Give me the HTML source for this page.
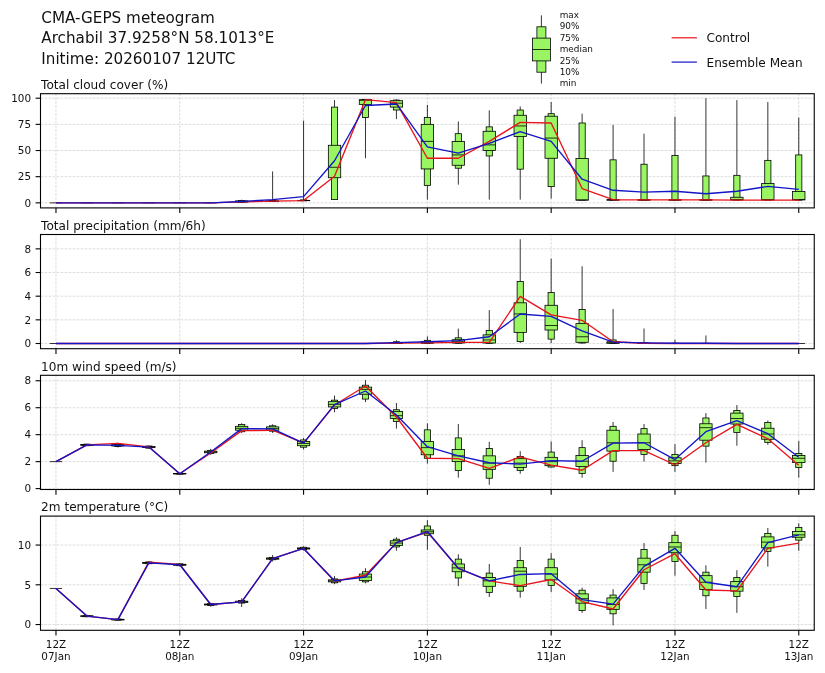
<!DOCTYPE html>
<html><head><meta charset="utf-8"><title>CMA-GEPS meteogram</title>
<style>html,body{margin:0;padding:0;background:#fff}svg{display:block;will-change:transform}</style></head>
<body>
<svg width="825" height="673" viewBox="0 0 825 673" font-family='"DejaVu Sans", "Liberation Sans", sans-serif'>
<rect width="825" height="673" fill="#fff"/>
<text x="41.3" y="22.7" font-size="15.2" fill="#111">CMA-GEPS meteogram</text>
<text x="41.3" y="43.3" font-size="15.2" fill="#111">Archabil 37.9258°N 58.1013°E</text>
<text x="41.3" y="63.9" font-size="15.2" fill="#111">Initime: 20260107 12UTC</text>
<g stroke="#000" stroke-width="0.8" fill="#99f562">
<line x1="541.4" y1="83.6" x2="541.4" y2="15.4"/>
<rect x="536.9" y="26.8" width="9" height="45.4"/>
<rect x="532.4" y="38.1" width="18" height="22.8"/>
<line x1="532.4" y1="49.5" x2="550.4" y2="49.5"/>
</g>
<text x="559.7" y="86.2" font-size="8.9" fill="#111">min</text>
<text x="559.7" y="74.8" font-size="8.9" fill="#111">10%</text>
<text x="559.7" y="63.5" font-size="8.9" fill="#111">25%</text>
<text x="559.7" y="52.1" font-size="8.9" fill="#111">median</text>
<text x="559.7" y="40.7" font-size="8.9" fill="#111">75%</text>
<text x="559.7" y="29.4" font-size="8.9" fill="#111">90%</text>
<text x="559.7" y="18.0" font-size="8.9" fill="#111">max</text>
<line x1="671.6" y1="37.8" x2="696.9" y2="37.8" stroke="#e8141c" stroke-width="1.2"/>
<line x1="671.6" y1="62.1" x2="696.9" y2="62.1" stroke="#1414c8" stroke-width="1.2"/>
<text x="706.5" y="41.9" font-size="12.1" fill="#111">Control</text>
<text x="706.5" y="66.5" font-size="12.1" fill="#111">Ensemble Mean</text>
<g id="panel0">
<g stroke="#d2d2d2" stroke-width="0.76" stroke-dasharray="2.8,1.2" fill="none">
<line x1="40.5" y1="202.85" x2="814.25" y2="202.85"/>
<line x1="40.5" y1="176.69" x2="814.25" y2="176.69"/>
<line x1="40.5" y1="150.52" x2="814.25" y2="150.52"/>
<line x1="40.5" y1="124.36" x2="814.25" y2="124.36"/>
<line x1="40.5" y1="98.20" x2="814.25" y2="98.20"/>
<line x1="55.98" y1="207.9" x2="55.98" y2="93.7"/>
<line x1="179.78" y1="207.9" x2="179.78" y2="93.7"/>
<line x1="303.57" y1="207.9" x2="303.57" y2="93.7"/>
<line x1="427.38" y1="207.9" x2="427.38" y2="93.7"/>
<line x1="551.17" y1="207.9" x2="551.17" y2="93.7"/>
<line x1="674.98" y1="207.9" x2="674.98" y2="93.7"/>
<line x1="798.77" y1="207.9" x2="798.77" y2="93.7"/>
</g>
<g stroke="#000" stroke-width="0.8" fill="#99f562">
<line x1="55.98" y1="202.85" x2="55.98" y2="202.85"/>
<rect x="52.88" y="202.85" width="6.19" height="0.00"/>
<rect x="49.79" y="202.85" width="12.37" height="0.00"/>
<line x1="49.79" y1="202.85" x2="62.16" y2="202.85"/>
<line x1="86.92" y1="202.85" x2="86.92" y2="202.85"/>
<rect x="83.83" y="202.85" width="6.19" height="0.00"/>
<rect x="80.74" y="202.85" width="12.37" height="0.00"/>
<line x1="80.74" y1="202.85" x2="93.11" y2="202.85"/>
<line x1="117.88" y1="202.85" x2="117.88" y2="202.85"/>
<rect x="114.78" y="202.85" width="6.19" height="0.00"/>
<rect x="111.69" y="202.85" width="12.37" height="0.00"/>
<line x1="111.69" y1="202.85" x2="124.06" y2="202.85"/>
<line x1="148.82" y1="202.85" x2="148.82" y2="202.85"/>
<rect x="145.73" y="202.85" width="6.19" height="0.00"/>
<rect x="142.64" y="202.85" width="12.37" height="0.00"/>
<line x1="142.64" y1="202.85" x2="155.01" y2="202.85"/>
<line x1="179.78" y1="202.85" x2="179.78" y2="202.85"/>
<rect x="176.68" y="202.85" width="6.19" height="0.00"/>
<rect x="173.59" y="202.85" width="12.37" height="0.00"/>
<line x1="173.59" y1="202.85" x2="185.96" y2="202.85"/>
<line x1="210.72" y1="202.85" x2="210.72" y2="202.85"/>
<rect x="207.63" y="202.85" width="6.19" height="0.00"/>
<rect x="204.54" y="202.85" width="12.37" height="0.00"/>
<line x1="204.54" y1="202.85" x2="216.91" y2="202.85"/>
<line x1="241.67" y1="202.54" x2="241.67" y2="199.71"/>
<rect x="238.58" y="200.44" width="6.19" height="1.88"/>
<rect x="235.49" y="200.86" width="12.37" height="1.26"/>
<line x1="235.49" y1="201.59" x2="247.86" y2="201.59"/>
<line x1="272.62" y1="201.80" x2="272.62" y2="171.45"/>
<rect x="269.53" y="200.55" width="6.19" height="0.94"/>
<rect x="266.44" y="200.97" width="12.37" height="0.31"/>
<line x1="266.44" y1="201.18" x2="278.81" y2="201.18"/>
<line x1="303.57" y1="200.97" x2="303.57" y2="120.60"/>
<rect x="300.48" y="199.92" width="6.19" height="0.84"/>
<rect x="297.39" y="200.34" width="12.37" height="0.31"/>
<line x1="297.39" y1="200.55" x2="309.76" y2="200.55"/>
<line x1="334.53" y1="199.61" x2="334.53" y2="100.08"/>
<rect x="331.43" y="107.10" width="6.19" height="92.51"/>
<rect x="328.34" y="145.29" width="12.37" height="32.44"/>
<line x1="328.34" y1="167.27" x2="340.71" y2="167.27"/>
<line x1="365.48" y1="158.27" x2="365.48" y2="99.04"/>
<rect x="362.38" y="99.35" width="6.19" height="18.21"/>
<rect x="359.29" y="99.67" width="12.37" height="4.92"/>
<line x1="359.29" y1="100.29" x2="371.66" y2="100.29"/>
<line x1="396.43" y1="119.13" x2="396.43" y2="99.35"/>
<rect x="393.33" y="100.08" width="6.19" height="9.94"/>
<rect x="390.24" y="100.71" width="12.37" height="6.38"/>
<line x1="390.24" y1="103.22" x2="402.61" y2="103.22"/>
<line x1="427.38" y1="199.61" x2="427.38" y2="104.90"/>
<rect x="424.28" y="117.56" width="6.19" height="67.81"/>
<rect x="421.19" y="124.36" width="12.37" height="44.58"/>
<line x1="421.19" y1="141.42" x2="433.56" y2="141.42"/>
<line x1="458.32" y1="184.64" x2="458.32" y2="121.43"/>
<rect x="455.23" y="133.68" width="6.19" height="34.53"/>
<rect x="452.14" y="141.42" width="12.37" height="23.86"/>
<line x1="452.14" y1="154.92" x2="464.51" y2="154.92"/>
<line x1="489.28" y1="199.61" x2="489.28" y2="110.34"/>
<rect x="486.18" y="126.87" width="6.19" height="29.09"/>
<rect x="483.09" y="131.27" width="12.37" height="19.26"/>
<line x1="483.09" y1="144.87" x2="495.46" y2="144.87"/>
<line x1="520.23" y1="199.61" x2="520.23" y2="106.47"/>
<rect x="517.13" y="110.03" width="6.19" height="59.13"/>
<rect x="514.04" y="115.26" width="12.37" height="21.24"/>
<line x1="514.04" y1="125.93" x2="526.41" y2="125.93"/>
<line x1="551.17" y1="198.56" x2="551.17" y2="102.07"/>
<rect x="548.08" y="113.69" width="6.19" height="72.94"/>
<rect x="544.99" y="116.20" width="12.37" height="42.07"/>
<line x1="544.99" y1="138.07" x2="557.36" y2="138.07"/>
<line x1="582.12" y1="200.13" x2="582.12" y2="113.69"/>
<rect x="579.03" y="123.00" width="6.19" height="77.13"/>
<rect x="575.94" y="158.48" width="12.37" height="41.65"/>
<line x1="575.94" y1="199.92" x2="588.31" y2="199.92"/>
<line x1="613.08" y1="200.13" x2="613.08" y2="124.89"/>
<rect x="609.98" y="159.84" width="6.19" height="40.29"/>
<rect x="606.89" y="199.61" width="12.37" height="0.52"/>
<line x1="606.89" y1="200.02" x2="619.26" y2="200.02"/>
<line x1="644.02" y1="200.13" x2="644.02" y2="133.68"/>
<rect x="640.93" y="164.23" width="6.19" height="35.89"/>
<rect x="637.84" y="199.71" width="12.37" height="0.42"/>
<line x1="637.84" y1="200.02" x2="650.21" y2="200.02"/>
<line x1="674.98" y1="200.13" x2="674.98" y2="116.72"/>
<rect x="671.88" y="155.55" width="6.19" height="44.58"/>
<rect x="668.79" y="199.71" width="12.37" height="0.42"/>
<line x1="668.79" y1="200.02" x2="681.16" y2="200.02"/>
<line x1="705.92" y1="200.13" x2="705.92" y2="98.20"/>
<rect x="702.83" y="175.95" width="6.19" height="24.17"/>
<rect x="699.74" y="199.71" width="12.37" height="0.42"/>
<line x1="699.74" y1="200.02" x2="712.11" y2="200.02"/>
<line x1="736.88" y1="200.13" x2="736.88" y2="100.08"/>
<rect x="733.78" y="175.33" width="6.19" height="24.80"/>
<rect x="730.69" y="197.25" width="12.37" height="2.67"/>
<line x1="730.69" y1="199.71" x2="743.06" y2="199.71"/>
<line x1="767.83" y1="200.13" x2="767.83" y2="102.07"/>
<rect x="764.73" y="160.36" width="6.19" height="39.77"/>
<rect x="761.64" y="183.49" width="12.37" height="16.43"/>
<line x1="761.64" y1="199.71" x2="774.01" y2="199.71"/>
<line x1="798.77" y1="200.13" x2="798.77" y2="117.56"/>
<rect x="795.68" y="154.92" width="6.19" height="45.21"/>
<rect x="792.59" y="191.44" width="12.37" height="8.48"/>
<line x1="792.59" y1="199.50" x2="804.96" y2="199.50"/>
</g>
<polyline points="55.98,202.85 86.92,202.85 117.88,202.85 148.82,202.85 179.78,202.85 210.72,202.85 241.67,201.80 272.62,201.18 303.57,200.55 334.53,176.27 365.48,99.67 396.43,102.60 427.38,158.27 458.32,158.27 489.28,141.42 520.23,122.37 551.17,123.00 582.12,188.51 613.08,199.71 644.02,199.92 674.98,199.92 705.92,199.92 736.88,200.13 767.83,200.13 798.77,200.13" fill="none" stroke="#e8141c" stroke-width="1.35" stroke-linejoin="round"/>
<polyline points="55.98,202.85 86.92,202.85 117.88,202.85 148.82,202.85 179.78,202.85 210.72,202.85 241.67,201.49 272.62,199.61 303.57,196.68 334.53,160.78 365.48,105.53 396.43,103.96 427.38,146.86 458.32,153.04 489.28,143.30 520.23,131.69 551.17,141.42 582.12,179.20 613.08,190.29 644.02,192.18 674.98,191.23 705.92,193.75 736.88,191.23 767.83,186.42 798.77,189.35" fill="none" stroke="#1414c8" stroke-width="1.35" stroke-linejoin="round"/>
<rect x="40.5" y="93.7" width="773.75" height="114.20" fill="none" stroke="#000" stroke-width="1.1"/>
<g stroke="#000" stroke-width="1.1">
<line x1="35.60" y1="202.85" x2="40.5" y2="202.85"/>
<line x1="35.60" y1="176.69" x2="40.5" y2="176.69"/>
<line x1="35.60" y1="150.52" x2="40.5" y2="150.52"/>
<line x1="35.60" y1="124.36" x2="40.5" y2="124.36"/>
<line x1="35.60" y1="98.20" x2="40.5" y2="98.20"/>
<line x1="55.98" y1="207.9" x2="55.98" y2="213.10"/>
<line x1="179.78" y1="207.9" x2="179.78" y2="213.10"/>
<line x1="303.57" y1="207.9" x2="303.57" y2="213.10"/>
<line x1="427.38" y1="207.9" x2="427.38" y2="213.10"/>
<line x1="551.17" y1="207.9" x2="551.17" y2="213.10"/>
<line x1="674.98" y1="207.9" x2="674.98" y2="213.10"/>
<line x1="798.77" y1="207.9" x2="798.77" y2="213.10"/>
</g>
<g font-size="10.4" fill="#111" text-anchor="end">
<text x="31.10" y="206.55">0</text>
<text x="31.10" y="180.39">25</text>
<text x="31.10" y="154.22">50</text>
<text x="31.10" y="128.06">75</text>
<text x="31.10" y="101.90">100</text>
</g>
<text x="41.10" y="88.90" font-size="12.1" fill="#111">Total cloud cover (%)</text>
</g>
<g id="panel1">
<g stroke="#d2d2d2" stroke-width="0.76" stroke-dasharray="2.8,1.2" fill="none">
<line x1="40.5" y1="343.50" x2="814.25" y2="343.50"/>
<line x1="40.5" y1="319.84" x2="814.25" y2="319.84"/>
<line x1="40.5" y1="296.18" x2="814.25" y2="296.18"/>
<line x1="40.5" y1="272.52" x2="814.25" y2="272.52"/>
<line x1="40.5" y1="248.86" x2="814.25" y2="248.86"/>
<line x1="55.98" y1="348.70000000000005" x2="55.98" y2="234.5"/>
<line x1="179.78" y1="348.70000000000005" x2="179.78" y2="234.5"/>
<line x1="303.57" y1="348.70000000000005" x2="303.57" y2="234.5"/>
<line x1="427.38" y1="348.70000000000005" x2="427.38" y2="234.5"/>
<line x1="551.17" y1="348.70000000000005" x2="551.17" y2="234.5"/>
<line x1="674.98" y1="348.70000000000005" x2="674.98" y2="234.5"/>
<line x1="798.77" y1="348.70000000000005" x2="798.77" y2="234.5"/>
</g>
<g stroke="#000" stroke-width="0.8" fill="#99f562">
<line x1="55.98" y1="343.50" x2="55.98" y2="343.50"/>
<rect x="52.88" y="343.50" width="6.19" height="0.00"/>
<rect x="49.79" y="343.50" width="12.37" height="0.00"/>
<line x1="49.79" y1="343.50" x2="62.16" y2="343.50"/>
<line x1="86.92" y1="343.50" x2="86.92" y2="343.50"/>
<rect x="83.83" y="343.50" width="6.19" height="0.00"/>
<rect x="80.74" y="343.50" width="12.37" height="0.00"/>
<line x1="80.74" y1="343.50" x2="93.11" y2="343.50"/>
<line x1="117.88" y1="343.50" x2="117.88" y2="343.50"/>
<rect x="114.78" y="343.50" width="6.19" height="0.00"/>
<rect x="111.69" y="343.50" width="12.37" height="0.00"/>
<line x1="111.69" y1="343.50" x2="124.06" y2="343.50"/>
<line x1="148.82" y1="343.50" x2="148.82" y2="343.50"/>
<rect x="145.73" y="343.50" width="6.19" height="0.00"/>
<rect x="142.64" y="343.50" width="12.37" height="0.00"/>
<line x1="142.64" y1="343.50" x2="155.01" y2="343.50"/>
<line x1="179.78" y1="343.50" x2="179.78" y2="343.50"/>
<rect x="176.68" y="343.50" width="6.19" height="0.00"/>
<rect x="173.59" y="343.50" width="12.37" height="0.00"/>
<line x1="173.59" y1="343.50" x2="185.96" y2="343.50"/>
<line x1="210.72" y1="343.50" x2="210.72" y2="343.50"/>
<rect x="207.63" y="343.50" width="6.19" height="0.00"/>
<rect x="204.54" y="343.50" width="12.37" height="0.00"/>
<line x1="204.54" y1="343.50" x2="216.91" y2="343.50"/>
<line x1="241.67" y1="343.50" x2="241.67" y2="343.50"/>
<rect x="238.58" y="343.50" width="6.19" height="0.00"/>
<rect x="235.49" y="343.50" width="12.37" height="0.00"/>
<line x1="235.49" y1="343.50" x2="247.86" y2="343.50"/>
<line x1="272.62" y1="343.50" x2="272.62" y2="343.50"/>
<rect x="269.53" y="343.50" width="6.19" height="0.00"/>
<rect x="266.44" y="343.50" width="12.37" height="0.00"/>
<line x1="266.44" y1="343.50" x2="278.81" y2="343.50"/>
<line x1="303.57" y1="343.50" x2="303.57" y2="343.50"/>
<rect x="300.48" y="343.50" width="6.19" height="0.00"/>
<rect x="297.39" y="343.50" width="12.37" height="0.00"/>
<line x1="297.39" y1="343.50" x2="309.76" y2="343.50"/>
<line x1="334.53" y1="343.50" x2="334.53" y2="343.50"/>
<rect x="331.43" y="343.50" width="6.19" height="0.00"/>
<rect x="328.34" y="343.50" width="12.37" height="0.00"/>
<line x1="328.34" y1="343.50" x2="340.71" y2="343.50"/>
<line x1="365.48" y1="343.50" x2="365.48" y2="343.50"/>
<rect x="362.38" y="343.50" width="6.19" height="0.00"/>
<rect x="359.29" y="343.50" width="12.37" height="0.00"/>
<line x1="359.29" y1="343.50" x2="371.66" y2="343.50"/>
<line x1="396.43" y1="343.50" x2="396.43" y2="340.31"/>
<rect x="393.33" y="341.73" width="6.19" height="1.77"/>
<rect x="390.24" y="342.55" width="12.37" height="0.95"/>
<line x1="390.24" y1="343.15" x2="402.61" y2="343.15"/>
<line x1="427.38" y1="343.50" x2="427.38" y2="336.40"/>
<rect x="424.28" y="340.31" width="6.19" height="3.19"/>
<rect x="421.19" y="341.37" width="12.37" height="1.89"/>
<line x1="421.19" y1="342.55" x2="433.56" y2="342.55"/>
<line x1="458.32" y1="343.50" x2="458.32" y2="328.59"/>
<rect x="455.23" y="337.82" width="6.19" height="5.44"/>
<rect x="452.14" y="339.71" width="12.37" height="3.31"/>
<line x1="452.14" y1="341.73" x2="464.51" y2="341.73"/>
<line x1="489.28" y1="343.50" x2="489.28" y2="310.14"/>
<rect x="486.18" y="330.37" width="6.19" height="12.89"/>
<rect x="483.09" y="334.86" width="12.37" height="8.16"/>
<line x1="483.09" y1="339.95" x2="495.46" y2="339.95"/>
<line x1="520.23" y1="343.03" x2="520.23" y2="239.28"/>
<rect x="517.13" y="281.39" width="6.19" height="60.21"/>
<rect x="514.04" y="302.80" width="12.37" height="29.57"/>
<line x1="514.04" y1="313.93" x2="526.41" y2="313.93"/>
<line x1="551.17" y1="343.03" x2="551.17" y2="258.68"/>
<rect x="548.08" y="292.51" width="6.19" height="46.61"/>
<rect x="544.99" y="305.29" width="12.37" height="24.72"/>
<line x1="544.99" y1="325.52" x2="557.36" y2="325.52"/>
<line x1="582.12" y1="343.50" x2="582.12" y2="266.25"/>
<rect x="579.03" y="309.55" width="6.19" height="33.48"/>
<rect x="575.94" y="323.63" width="12.37" height="18.69"/>
<line x1="575.94" y1="336.76" x2="588.31" y2="336.76"/>
<line x1="613.08" y1="343.50" x2="613.08" y2="309.07"/>
<rect x="609.98" y="339.95" width="6.19" height="3.55"/>
<rect x="606.89" y="341.73" width="12.37" height="1.54"/>
<line x1="606.89" y1="342.79" x2="619.26" y2="342.79"/>
<line x1="644.02" y1="343.50" x2="644.02" y2="328.48"/>
<rect x="640.93" y="342.79" width="6.19" height="0.71"/>
<rect x="637.84" y="343.15" width="12.37" height="0.35"/>
<line x1="637.84" y1="343.38" x2="650.21" y2="343.38"/>
<line x1="674.98" y1="343.50" x2="674.98" y2="339.71"/>
<rect x="671.88" y="343.15" width="6.19" height="0.35"/>
<rect x="668.79" y="343.38" width="12.37" height="0.12"/>
<line x1="668.79" y1="343.50" x2="681.16" y2="343.50"/>
<line x1="705.92" y1="343.50" x2="705.92" y2="335.46"/>
<rect x="702.83" y="343.26" width="6.19" height="0.24"/>
<rect x="699.74" y="343.50" width="12.37" height="0.00"/>
<line x1="699.74" y1="343.50" x2="712.11" y2="343.50"/>
<line x1="736.88" y1="343.50" x2="736.88" y2="343.50"/>
<rect x="733.78" y="343.50" width="6.19" height="0.00"/>
<rect x="730.69" y="343.50" width="12.37" height="0.00"/>
<line x1="730.69" y1="343.50" x2="743.06" y2="343.50"/>
<line x1="767.83" y1="343.50" x2="767.83" y2="343.50"/>
<rect x="764.73" y="343.50" width="6.19" height="0.00"/>
<rect x="761.64" y="343.50" width="12.37" height="0.00"/>
<line x1="761.64" y1="343.50" x2="774.01" y2="343.50"/>
<line x1="798.77" y1="343.50" x2="798.77" y2="343.50"/>
<rect x="795.68" y="343.50" width="6.19" height="0.00"/>
<rect x="792.59" y="343.50" width="12.37" height="0.00"/>
<line x1="792.59" y1="343.50" x2="804.96" y2="343.50"/>
</g>
<polyline points="55.98,343.50 86.92,343.50 117.88,343.50 148.82,343.50 179.78,343.50 210.72,343.50 241.67,343.50 272.62,343.50 303.57,343.50 334.53,343.50 365.48,343.50 396.43,343.15 427.38,342.91 458.32,342.32 489.28,342.32 520.23,296.42 551.17,314.87 582.12,320.31 613.08,341.73 644.02,343.26 674.98,343.50 705.92,343.50 736.88,343.50 767.83,343.50 798.77,343.50" fill="none" stroke="#e8141c" stroke-width="1.35" stroke-linejoin="round"/>
<polyline points="55.98,343.50 86.92,343.50 117.88,343.50 148.82,343.50 179.78,343.50 210.72,343.50 241.67,343.50 272.62,343.50 303.57,343.50 334.53,343.50 365.48,343.50 396.43,342.55 427.38,341.73 458.32,340.66 489.28,336.76 520.23,314.04 551.17,316.41 582.12,330.96 613.08,342.08 644.02,342.91 674.98,343.26 705.92,343.26 736.88,343.50 767.83,343.50 798.77,343.50" fill="none" stroke="#1414c8" stroke-width="1.35" stroke-linejoin="round"/>
<rect x="40.5" y="234.5" width="773.75" height="114.20" fill="none" stroke="#000" stroke-width="1.1"/>
<g stroke="#000" stroke-width="1.1">
<line x1="35.60" y1="343.50" x2="40.5" y2="343.50"/>
<line x1="35.60" y1="319.84" x2="40.5" y2="319.84"/>
<line x1="35.60" y1="296.18" x2="40.5" y2="296.18"/>
<line x1="35.60" y1="272.52" x2="40.5" y2="272.52"/>
<line x1="35.60" y1="248.86" x2="40.5" y2="248.86"/>
<line x1="55.98" y1="348.70000000000005" x2="55.98" y2="353.90"/>
<line x1="179.78" y1="348.70000000000005" x2="179.78" y2="353.90"/>
<line x1="303.57" y1="348.70000000000005" x2="303.57" y2="353.90"/>
<line x1="427.38" y1="348.70000000000005" x2="427.38" y2="353.90"/>
<line x1="551.17" y1="348.70000000000005" x2="551.17" y2="353.90"/>
<line x1="674.98" y1="348.70000000000005" x2="674.98" y2="353.90"/>
<line x1="798.77" y1="348.70000000000005" x2="798.77" y2="353.90"/>
</g>
<g font-size="10.4" fill="#111" text-anchor="end">
<text x="31.10" y="347.20">0</text>
<text x="31.10" y="323.54">2</text>
<text x="31.10" y="299.88">4</text>
<text x="31.10" y="276.22">6</text>
<text x="31.10" y="252.56">8</text>
</g>
<text x="41.10" y="229.70" font-size="12.1" fill="#111">Total precipitation (mm/6h)</text>
</g>
<g id="panel2">
<g stroke="#d2d2d2" stroke-width="0.76" stroke-dasharray="2.8,1.2" fill="none">
<line x1="40.5" y1="488.60" x2="814.25" y2="488.60"/>
<line x1="40.5" y1="461.64" x2="814.25" y2="461.64"/>
<line x1="40.5" y1="434.68" x2="814.25" y2="434.68"/>
<line x1="40.5" y1="407.72" x2="814.25" y2="407.72"/>
<line x1="40.5" y1="380.76" x2="814.25" y2="380.76"/>
<line x1="55.98" y1="489.5" x2="55.98" y2="375.3"/>
<line x1="179.78" y1="489.5" x2="179.78" y2="375.3"/>
<line x1="303.57" y1="489.5" x2="303.57" y2="375.3"/>
<line x1="427.38" y1="489.5" x2="427.38" y2="375.3"/>
<line x1="551.17" y1="489.5" x2="551.17" y2="375.3"/>
<line x1="674.98" y1="489.5" x2="674.98" y2="375.3"/>
<line x1="798.77" y1="489.5" x2="798.77" y2="375.3"/>
</g>
<g stroke="#000" stroke-width="0.8" fill="#99f562">
<line x1="55.98" y1="461.64" x2="55.98" y2="461.64"/>
<rect x="52.88" y="461.64" width="6.19" height="0.00"/>
<rect x="49.79" y="461.64" width="12.37" height="0.00"/>
<line x1="49.79" y1="461.64" x2="62.16" y2="461.64"/>
<line x1="86.92" y1="446.14" x2="86.92" y2="443.71"/>
<rect x="83.83" y="444.12" width="6.19" height="1.62"/>
<rect x="80.74" y="444.52" width="12.37" height="0.81"/>
<line x1="80.74" y1="444.92" x2="93.11" y2="444.92"/>
<line x1="117.88" y1="447.49" x2="117.88" y2="442.77"/>
<rect x="114.78" y="443.85" width="6.19" height="2.70"/>
<rect x="111.69" y="444.52" width="12.37" height="1.48"/>
<line x1="111.69" y1="445.33" x2="124.06" y2="445.33"/>
<line x1="148.82" y1="448.83" x2="148.82" y2="445.46"/>
<rect x="145.73" y="446.00" width="6.19" height="2.16"/>
<rect x="142.64" y="446.54" width="12.37" height="1.08"/>
<line x1="142.64" y1="447.08" x2="155.01" y2="447.08"/>
<line x1="179.78" y1="474.58" x2="179.78" y2="472.83"/>
<rect x="176.68" y="473.23" width="6.19" height="0.94"/>
<rect x="173.59" y="473.50" width="12.37" height="0.40"/>
<line x1="173.59" y1="473.77" x2="185.96" y2="473.77"/>
<line x1="210.72" y1="454.90" x2="210.72" y2="448.83"/>
<rect x="207.63" y="450.32" width="6.19" height="3.24"/>
<rect x="204.54" y="451.13" width="12.37" height="1.62"/>
<line x1="204.54" y1="451.93" x2="216.91" y2="451.93"/>
<line x1="241.67" y1="433.06" x2="241.67" y2="423.22"/>
<rect x="238.58" y="424.44" width="6.19" height="7.28"/>
<rect x="235.49" y="426.32" width="12.37" height="3.91"/>
<line x1="235.49" y1="428.34" x2="247.86" y2="428.34"/>
<line x1="272.62" y1="433.06" x2="272.62" y2="424.30"/>
<rect x="269.53" y="425.78" width="6.19" height="5.39"/>
<rect x="266.44" y="426.86" width="12.37" height="3.37"/>
<line x1="266.44" y1="428.61" x2="278.81" y2="428.61"/>
<line x1="303.57" y1="449.51" x2="303.57" y2="437.92"/>
<rect x="300.48" y="439.94" width="6.19" height="7.28"/>
<rect x="297.39" y="441.42" width="12.37" height="4.31"/>
<line x1="297.39" y1="443.44" x2="309.76" y2="443.44"/>
<line x1="334.53" y1="412.30" x2="334.53" y2="395.59"/>
<rect x="331.43" y="400.17" width="6.19" height="8.22"/>
<rect x="328.34" y="401.65" width="12.37" height="5.26"/>
<line x1="328.34" y1="404.35" x2="340.71" y2="404.35"/>
<line x1="365.48" y1="402.06" x2="365.48" y2="380.09"/>
<rect x="362.38" y="385.21" width="6.19" height="13.88"/>
<rect x="359.29" y="387.10" width="12.37" height="7.14"/>
<line x1="359.29" y1="389.39" x2="371.66" y2="389.39"/>
<line x1="396.43" y1="428.61" x2="396.43" y2="403.00"/>
<rect x="393.33" y="409.74" width="6.19" height="11.73"/>
<rect x="390.24" y="411.36" width="12.37" height="7.14"/>
<line x1="390.24" y1="415.67" x2="402.61" y2="415.67"/>
<line x1="427.38" y1="463.53" x2="427.38" y2="423.36"/>
<rect x="424.28" y="429.83" width="6.19" height="28.44"/>
<rect x="421.19" y="441.42" width="12.37" height="13.35"/>
<line x1="421.19" y1="447.62" x2="433.56" y2="447.62"/>
<line x1="458.32" y1="477.68" x2="458.32" y2="424.03"/>
<rect x="455.23" y="437.92" width="6.19" height="32.62"/>
<rect x="452.14" y="449.51" width="12.37" height="12.13"/>
<line x1="452.14" y1="455.84" x2="464.51" y2="455.84"/>
<line x1="489.28" y1="484.83" x2="489.28" y2="441.82"/>
<rect x="486.18" y="448.56" width="6.19" height="29.66"/>
<rect x="483.09" y="455.84" width="12.37" height="13.48"/>
<line x1="483.09" y1="463.12" x2="495.46" y2="463.12"/>
<line x1="520.23" y1="473.77" x2="520.23" y2="451.13"/>
<rect x="517.13" y="456.38" width="6.19" height="14.15"/>
<rect x="514.04" y="458.67" width="12.37" height="8.76"/>
<line x1="514.04" y1="463.12" x2="526.41" y2="463.12"/>
<line x1="551.17" y1="467.44" x2="551.17" y2="441.42"/>
<rect x="548.08" y="452.07" width="6.19" height="14.96"/>
<rect x="544.99" y="457.33" width="12.37" height="8.36"/>
<line x1="544.99" y1="461.64" x2="557.36" y2="461.64"/>
<line x1="582.12" y1="477.68" x2="582.12" y2="440.21"/>
<rect x="579.03" y="447.62" width="6.19" height="25.75"/>
<rect x="575.94" y="455.44" width="12.37" height="11.05"/>
<line x1="575.94" y1="461.24" x2="588.31" y2="461.24"/>
<line x1="613.08" y1="471.88" x2="613.08" y2="422.01"/>
<rect x="609.98" y="426.32" width="6.19" height="34.91"/>
<rect x="606.89" y="430.23" width="12.37" height="20.89"/>
<line x1="606.89" y1="442.77" x2="619.26" y2="442.77"/>
<line x1="644.02" y1="461.64" x2="644.02" y2="424.03"/>
<rect x="640.93" y="428.61" width="6.19" height="25.75"/>
<rect x="637.84" y="434.01" width="12.37" height="15.50"/>
<line x1="637.84" y1="442.77" x2="650.21" y2="442.77"/>
<line x1="674.98" y1="471.88" x2="674.98" y2="444.12"/>
<rect x="671.88" y="454.36" width="6.19" height="11.32"/>
<rect x="668.79" y="457.73" width="12.37" height="5.80"/>
<line x1="668.79" y1="460.83" x2="681.16" y2="460.83"/>
<line x1="705.92" y1="462.58" x2="705.92" y2="413.11"/>
<rect x="702.83" y="417.96" width="6.19" height="28.17"/>
<rect x="699.74" y="423.76" width="12.37" height="16.45"/>
<line x1="699.74" y1="427.67" x2="712.11" y2="427.67"/>
<line x1="736.88" y1="445.73" x2="736.88" y2="405.02"/>
<rect x="733.78" y="410.42" width="6.19" height="22.11"/>
<rect x="730.69" y="413.11" width="12.37" height="10.92"/>
<line x1="730.69" y1="418.50" x2="743.06" y2="418.50"/>
<line x1="767.83" y1="444.79" x2="767.83" y2="420.53"/>
<rect x="764.73" y="422.41" width="6.19" height="19.95"/>
<rect x="761.64" y="428.21" width="12.37" height="11.05"/>
<line x1="761.64" y1="434.01" x2="774.01" y2="434.01"/>
<line x1="798.77" y1="477.68" x2="798.77" y2="440.88"/>
<rect x="795.68" y="453.42" width="6.19" height="14.02"/>
<rect x="792.59" y="455.44" width="12.37" height="7.14"/>
<line x1="792.59" y1="458.27" x2="804.96" y2="458.27"/>
</g>
<polyline points="55.98,461.64 86.92,444.92 117.88,443.31 148.82,446.81 179.78,473.77 210.72,453.01 241.67,430.64 272.62,430.23 303.57,443.17 334.53,405.02 365.48,386.02 396.43,417.02 427.38,458.27 458.32,458.67 489.28,468.38 520.23,456.92 551.17,465.14 582.12,470.27 613.08,450.59 644.02,450.59 674.98,464.74 705.92,442.77 736.88,424.30 767.83,438.86 798.77,465.14" fill="none" stroke="#e8141c" stroke-width="1.35" stroke-linejoin="round"/>
<polyline points="55.98,461.64 86.92,444.92 117.88,445.33 148.82,447.08 179.78,473.77 210.72,451.93 241.67,428.61 272.62,428.88 303.57,443.17 334.53,404.62 365.48,391.00 396.43,415.00 427.38,446.68 458.32,455.84 489.28,462.72 520.23,464.07 551.17,460.70 582.12,461.24 613.08,443.17 644.02,442.77 674.98,459.62 705.92,431.71 736.88,420.53 767.83,433.74 798.77,457.33" fill="none" stroke="#1414c8" stroke-width="1.35" stroke-linejoin="round"/>
<rect x="40.5" y="375.3" width="773.75" height="114.20" fill="none" stroke="#000" stroke-width="1.1"/>
<g stroke="#000" stroke-width="1.1">
<line x1="35.60" y1="488.60" x2="40.5" y2="488.60"/>
<line x1="35.60" y1="461.64" x2="40.5" y2="461.64"/>
<line x1="35.60" y1="434.68" x2="40.5" y2="434.68"/>
<line x1="35.60" y1="407.72" x2="40.5" y2="407.72"/>
<line x1="35.60" y1="380.76" x2="40.5" y2="380.76"/>
<line x1="55.98" y1="489.5" x2="55.98" y2="494.70"/>
<line x1="179.78" y1="489.5" x2="179.78" y2="494.70"/>
<line x1="303.57" y1="489.5" x2="303.57" y2="494.70"/>
<line x1="427.38" y1="489.5" x2="427.38" y2="494.70"/>
<line x1="551.17" y1="489.5" x2="551.17" y2="494.70"/>
<line x1="674.98" y1="489.5" x2="674.98" y2="494.70"/>
<line x1="798.77" y1="489.5" x2="798.77" y2="494.70"/>
</g>
<g font-size="10.4" fill="#111" text-anchor="end">
<text x="31.10" y="492.30">0</text>
<text x="31.10" y="465.34">2</text>
<text x="31.10" y="438.38">4</text>
<text x="31.10" y="411.42">6</text>
<text x="31.10" y="384.46">8</text>
</g>
<text x="41.10" y="370.50" font-size="12.1" fill="#111">10m wind speed (m/s)</text>
</g>
<g id="panel3">
<g stroke="#d2d2d2" stroke-width="0.76" stroke-dasharray="2.8,1.2" fill="none">
<line x1="40.5" y1="624.55" x2="814.25" y2="624.55"/>
<line x1="40.5" y1="584.80" x2="814.25" y2="584.80"/>
<line x1="40.5" y1="545.05" x2="814.25" y2="545.05"/>
<line x1="55.98" y1="630.3000000000001" x2="55.98" y2="516.1"/>
<line x1="179.78" y1="630.3000000000001" x2="179.78" y2="516.1"/>
<line x1="303.57" y1="630.3000000000001" x2="303.57" y2="516.1"/>
<line x1="427.38" y1="630.3000000000001" x2="427.38" y2="516.1"/>
<line x1="551.17" y1="630.3000000000001" x2="551.17" y2="516.1"/>
<line x1="674.98" y1="630.3000000000001" x2="674.98" y2="516.1"/>
<line x1="798.77" y1="630.3000000000001" x2="798.77" y2="516.1"/>
</g>
<g stroke="#000" stroke-width="0.8" fill="#99f562">
<line x1="55.98" y1="588.46" x2="55.98" y2="588.46"/>
<rect x="52.88" y="588.46" width="6.19" height="0.00"/>
<rect x="49.79" y="588.46" width="12.37" height="0.00"/>
<line x1="49.79" y1="588.46" x2="62.16" y2="588.46"/>
<line x1="86.92" y1="617.39" x2="86.92" y2="614.61"/>
<rect x="83.83" y="615.41" width="6.19" height="1.35"/>
<rect x="80.74" y="615.80" width="12.37" height="0.64"/>
<line x1="80.74" y1="616.12" x2="93.11" y2="616.12"/>
<line x1="117.88" y1="620.57" x2="117.88" y2="618.35"/>
<rect x="114.78" y="618.98" width="6.19" height="1.19"/>
<rect x="111.69" y="619.30" width="12.37" height="0.64"/>
<line x1="111.69" y1="619.62" x2="124.06" y2="619.62"/>
<line x1="148.82" y1="564.53" x2="148.82" y2="561.11"/>
<rect x="145.73" y="561.90" width="6.19" height="1.83"/>
<rect x="142.64" y="562.38" width="12.37" height="0.95"/>
<line x1="142.64" y1="562.86" x2="155.01" y2="562.86"/>
<line x1="179.78" y1="566.51" x2="179.78" y2="563.18"/>
<rect x="176.68" y="563.81" width="6.19" height="1.91"/>
<rect x="173.59" y="564.29" width="12.37" height="0.95"/>
<line x1="173.59" y1="564.77" x2="185.96" y2="564.77"/>
<line x1="210.72" y1="606.66" x2="210.72" y2="602.69"/>
<rect x="207.63" y="603.56" width="6.19" height="1.91"/>
<rect x="204.54" y="604.04" width="12.37" height="0.95"/>
<line x1="204.54" y1="604.52" x2="216.91" y2="604.52"/>
<line x1="241.67" y1="607.06" x2="241.67" y2="598.31"/>
<rect x="238.58" y="600.54" width="6.19" height="2.54"/>
<rect x="235.49" y="601.18" width="12.37" height="1.27"/>
<line x1="235.49" y1="601.81" x2="247.86" y2="601.81"/>
<line x1="272.62" y1="561.51" x2="272.62" y2="555.07"/>
<rect x="269.53" y="557.37" width="6.19" height="2.38"/>
<rect x="266.44" y="557.93" width="12.37" height="1.27"/>
<line x1="266.44" y1="558.56" x2="278.81" y2="558.56"/>
<line x1="303.57" y1="550.62" x2="303.57" y2="546.24"/>
<rect x="300.48" y="547.28" width="6.19" height="2.38"/>
<rect x="297.39" y="547.91" width="12.37" height="1.11"/>
<line x1="297.39" y1="548.47" x2="309.76" y2="548.47"/>
<line x1="334.53" y1="584.16" x2="334.53" y2="576.05"/>
<rect x="331.43" y="578.92" width="6.19" height="3.90"/>
<rect x="328.34" y="579.87" width="12.37" height="1.99"/>
<line x1="328.34" y1="580.82" x2="340.71" y2="580.82"/>
<line x1="365.48" y1="583.37" x2="365.48" y2="568.26"/>
<rect x="362.38" y="571.76" width="6.19" height="10.10"/>
<rect x="359.29" y="574.07" width="12.37" height="6.44"/>
<line x1="359.29" y1="577.01" x2="371.66" y2="577.01"/>
<line x1="396.43" y1="550.77" x2="396.43" y2="537.26"/>
<rect x="393.33" y="539.17" width="6.19" height="7.79"/>
<rect x="390.24" y="540.76" width="12.37" height="4.61"/>
<line x1="390.24" y1="543.06" x2="402.61" y2="543.06"/>
<line x1="427.38" y1="549.82" x2="427.38" y2="520.17"/>
<rect x="424.28" y="525.97" width="6.19" height="9.30"/>
<rect x="421.19" y="529.94" width="12.37" height="3.82"/>
<line x1="421.19" y1="531.77" x2="433.56" y2="531.77"/>
<line x1="458.32" y1="586.07" x2="458.32" y2="554.27"/>
<rect x="455.23" y="559.12" width="6.19" height="18.84"/>
<rect x="452.14" y="563.97" width="12.37" height="7.79"/>
<line x1="452.14" y1="567.87" x2="464.51" y2="567.87"/>
<line x1="489.28" y1="596.96" x2="489.28" y2="563.97"/>
<rect x="486.18" y="573.11" width="6.19" height="19.40"/>
<rect x="483.09" y="577.41" width="12.37" height="8.90"/>
<line x1="483.09" y1="580.82" x2="495.46" y2="580.82"/>
<line x1="520.23" y1="597.76" x2="520.23" y2="546.96"/>
<rect x="517.13" y="560.47" width="6.19" height="30.69"/>
<rect x="514.04" y="567.71" width="12.37" height="18.60"/>
<line x1="514.04" y1="571.21" x2="526.41" y2="571.21"/>
<line x1="551.17" y1="591.95" x2="551.17" y2="553.16"/>
<rect x="548.08" y="559.12" width="6.19" height="26.24"/>
<rect x="544.99" y="567.71" width="12.37" height="12.16"/>
<line x1="544.99" y1="574.07" x2="557.36" y2="574.07"/>
<line x1="582.12" y1="612.86" x2="582.12" y2="587.66"/>
<rect x="579.03" y="590.21" width="6.19" height="20.35"/>
<rect x="575.94" y="593.86" width="12.37" height="9.30"/>
<line x1="575.94" y1="598.71" x2="588.31" y2="598.71"/>
<line x1="613.08" y1="625.42" x2="613.08" y2="589.17"/>
<rect x="609.98" y="595.06" width="6.19" height="18.76"/>
<rect x="606.89" y="597.92" width="12.37" height="11.45"/>
<line x1="606.89" y1="604.52" x2="619.26" y2="604.52"/>
<line x1="644.02" y1="589.97" x2="644.02" y2="543.06"/>
<rect x="640.93" y="549.42" width="6.19" height="33.95"/>
<rect x="637.84" y="558.17" width="12.37" height="13.99"/>
<line x1="637.84" y1="564.77" x2="650.21" y2="564.77"/>
<line x1="674.98" y1="575.66" x2="674.98" y2="531.06"/>
<rect x="671.88" y="535.27" width="6.19" height="26.24"/>
<rect x="668.79" y="542.66" width="12.37" height="10.10"/>
<line x1="668.79" y1="546.96" x2="681.16" y2="546.96"/>
<line x1="705.92" y1="608.97" x2="705.92" y2="565.32"/>
<rect x="702.83" y="572.16" width="6.19" height="23.61"/>
<rect x="699.74" y="575.66" width="12.37" height="13.91"/>
<line x1="699.74" y1="582.26" x2="712.11" y2="582.26"/>
<line x1="736.88" y1="612.86" x2="736.88" y2="570.17"/>
<rect x="733.78" y="577.57" width="6.19" height="18.84"/>
<rect x="730.69" y="581.46" width="12.37" height="9.70"/>
<line x1="730.69" y1="586.71" x2="743.06" y2="586.71"/>
<line x1="767.83" y1="566.67" x2="767.83" y2="527.96"/>
<rect x="764.73" y="533.36" width="6.19" height="18.05"/>
<rect x="761.64" y="536.86" width="12.37" height="11.05"/>
<line x1="761.64" y1="542.11" x2="774.01" y2="542.11"/>
<line x1="798.77" y1="550.77" x2="798.77" y2="523.27"/>
<rect x="795.68" y="527.56" width="6.19" height="12.56"/>
<rect x="792.59" y="531.46" width="12.37" height="5.80"/>
<line x1="792.59" y1="534.87" x2="804.96" y2="534.87"/>
</g>
<polyline points="55.98,588.46 86.92,616.12 117.88,619.62 148.82,562.06 179.78,564.53 210.72,604.52 241.67,601.81 272.62,558.56 303.57,548.47 334.53,581.22 365.48,575.26 396.43,542.66 427.38,532.17 458.32,568.26 489.28,580.82 520.23,585.67 551.17,579.47 582.12,601.57 613.08,608.97 644.02,569.77 674.98,553.72 705.92,589.97 736.88,590.92 767.83,548.31 798.77,543.06" fill="none" stroke="#e8141c" stroke-width="1.35" stroke-linejoin="round"/>
<polyline points="55.98,588.46 86.92,616.12 117.88,619.62 148.82,562.86 179.78,564.77 210.72,604.52 241.67,601.81 272.62,558.56 303.57,548.47 334.53,580.82 365.48,577.01 396.43,542.66 427.38,531.53 458.32,568.26 489.28,580.82 520.23,574.46 551.17,573.67 582.12,599.67 613.08,604.12 644.02,566.36 674.98,548.31 705.92,582.26 736.88,586.71 767.83,542.66 798.77,534.87" fill="none" stroke="#1414c8" stroke-width="1.35" stroke-linejoin="round"/>
<rect x="40.5" y="516.1" width="773.75" height="114.20" fill="none" stroke="#000" stroke-width="1.1"/>
<g stroke="#000" stroke-width="1.1">
<line x1="35.60" y1="624.55" x2="40.5" y2="624.55"/>
<line x1="35.60" y1="584.80" x2="40.5" y2="584.80"/>
<line x1="35.60" y1="545.05" x2="40.5" y2="545.05"/>
<line x1="55.98" y1="630.3000000000001" x2="55.98" y2="635.50"/>
<line x1="179.78" y1="630.3000000000001" x2="179.78" y2="635.50"/>
<line x1="303.57" y1="630.3000000000001" x2="303.57" y2="635.50"/>
<line x1="427.38" y1="630.3000000000001" x2="427.38" y2="635.50"/>
<line x1="551.17" y1="630.3000000000001" x2="551.17" y2="635.50"/>
<line x1="674.98" y1="630.3000000000001" x2="674.98" y2="635.50"/>
<line x1="798.77" y1="630.3000000000001" x2="798.77" y2="635.50"/>
</g>
<g font-size="10.4" fill="#111" text-anchor="end">
<text x="31.10" y="628.25">0</text>
<text x="31.10" y="588.50">5</text>
<text x="31.10" y="548.75">10</text>
</g>
<text x="41.10" y="511.30" font-size="12.1" fill="#111">2m temperature (°C)</text>
</g>
<g font-size="10.4" fill="#111" text-anchor="middle">
<text x="55.98" y="647.80">12Z</text>
<text x="55.98" y="659.90">07Jan</text>
<text x="179.78" y="647.80">12Z</text>
<text x="179.78" y="659.90">08Jan</text>
<text x="303.57" y="647.80">12Z</text>
<text x="303.57" y="659.90">09Jan</text>
<text x="427.38" y="647.80">12Z</text>
<text x="427.38" y="659.90">10Jan</text>
<text x="551.17" y="647.80">12Z</text>
<text x="551.17" y="659.90">11Jan</text>
<text x="674.98" y="647.80">12Z</text>
<text x="674.98" y="659.90">12Jan</text>
<text x="798.77" y="647.80">12Z</text>
<text x="798.77" y="659.90">13Jan</text>
</g>
</svg>
</body></html>
